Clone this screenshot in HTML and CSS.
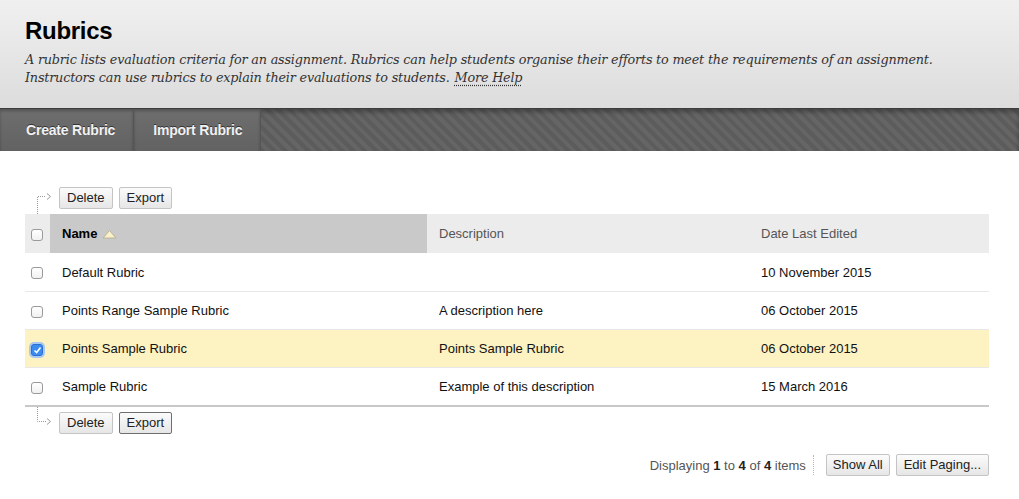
FILE: index.html
```html
<!DOCTYPE html>
<html>
<head>
<meta charset="utf-8">
<link rel="stylesheet" href="styles.css">
</head>
<body>
<header class="page-header">
  <h1 class="title">Rubrics</h1>
  <p class="intro"><span class="intro-text">A rubric lists evaluation criteria for an assignment. Rubrics can help students organise their efforts to meet the requirements of an assignment. Instructors can use rubrics to explain their evaluations to students.</span><a class="help" href="#">More Help</a></p>
</header>
<nav class="toolbar">
  <a class="tool" href="#">Create Rubric</a>
  <a class="tool" href="#">Import Rubric</a>
</nav>
<main class="content">
  <div class="actions actions-top">
    <svg class="connector" width="34" height="27" viewBox="0 0 34 27">
      <path d="M12.5 27 V9.5 H21" fill="none" stroke="#9a9a9a" stroke-dasharray="1 1"/>
      <path d="M22 6.5 L25.5 9.5 L22 12.5" fill="none" stroke="#9a9a9a"/>
    </svg>
    <button class="btn">Delete</button>
    <button class="btn">Export</button>
  </div>
  <table class="grid">
    <colgroup>
      <col class="w-check">
      <col class="w-name">
      <col class="w-desc">
      <col>
    </colgroup>
    <thead>
      <tr>
        <th class="c-check"><span class="cb"></span></th>
        <th class="sorted">Name <svg class="sort" width="15" height="10" viewBox="0 0 15 10"><path d="M1 9 L7.5 1.5 L14 9 Z" fill="#fbf1c8" stroke="#b9b29a"/></svg></th>
        <th>Description</th>
        <th>Date Last Edited</th>
      </tr>
    </thead>
    <tbody>
      <tr>
        <td class="c-check"><span class="cb"></span></td>
        <td>Default Rubric</td>
        <td></td>
        <td>10 November 2015</td>
      </tr>
      <tr>
        <td class="c-check"><span class="cb"></span></td>
        <td>Points Range Sample Rubric</td>
        <td>A description here</td>
        <td>06 October 2015</td>
      </tr>
      <tr class="selected">
        <td class="c-check"><span class="cb checked"><svg width="9" height="8" viewBox="0 0 9 8"><path d="M1.5 4.5 L3.6 6.5 L7.5 1.5" fill="none" stroke="#fff" stroke-width="1.6"/></svg></span></td>
        <td>Points Sample Rubric</td>
        <td>Points Sample Rubric</td>
        <td>06 October 2015</td>
      </tr>
      <tr>
        <td class="c-check"><span class="cb"></span></td>
        <td>Sample Rubric</td>
        <td>Example of this description</td>
        <td>15 March 2016</td>
      </tr>
    </tbody>
  </table>
  <div class="actions actions-bottom">
    <svg class="connector" width="34" height="27" viewBox="0 0 34 27">
      <path d="M12.5 0 V14.5 H21" fill="none" stroke="#9a9a9a" stroke-dasharray="1 1"/>
      <path d="M22 11.5 L25.5 14.5 L22 17.5" fill="none" stroke="#9a9a9a"/>
    </svg>
    <button class="btn">Delete</button>
    <button class="btn focus">Export</button>
  </div>
  <div class="paging">
    <span class="count">Displaying <b>1</b> to <b>4</b> of <b>4</b> items</span>
    <span class="sep"></span>
    <button class="btn show-all">Show All</button>
    <button class="btn">Edit Paging...</button>
  </div>
</main>
</body>
</html>
```
FILE: styles.css
```css
html, body {
  margin: 0;
  padding: 0;
  background: #fff;
}
body {
  font-family: "Liberation Sans", Arial, sans-serif;
  font-size: 13px;
  color: #222;
}
.page-header {
  height: 109px;
  box-sizing: border-box;
  padding: 17px 25px 0 25px;
  background: linear-gradient(#f0f0f0, #dcdcdc);
  border-bottom: 1px solid #3c3c3c;
}
.title {
  margin: 0;
  font-size: 24px;
  font-weight: bold;
  color: #000;
  line-height: 28px;
  letter-spacing: -0.3px;
}
.intro {
  max-width: 935px;
  margin: 6px 0 0 0;
  font-family: "DejaVu Serif", Georgia, serif;
  font-style: italic;
  font-size: 12.8px;
  letter-spacing: -0.2px;
  line-height: 18px;
  color: #333;
}
.help {
  display: inline-block;
  margin-left: 5px;
  line-height: 16px;
  color: #333;
  text-decoration: underline dotted #333;
  text-underline-offset: 3px;
}
.toolbar {
  display: flex;
  height: 42px;
  background: repeating-linear-gradient(45deg, #5c5c5c 0 4px, #656565 4px 8px);
  box-shadow: inset 0 3px 4px rgba(0,0,0,0.3);
}
.tool {
  display: flex;
  align-items: center;
  padding: 0 18px 0 26px;
  background: linear-gradient(#6e6e6e, #626262);
  border-right: 1px solid #555;
  color: #f2f2f2;
  font-weight: bold;
  font-size: 14px;
  text-decoration: none;
  text-shadow: 0 -1px 0 #333;
  box-shadow: inset 0 2px 3px rgba(0,0,0,0.25);
  letter-spacing: -0.2px;
}
.tool + .tool {
  padding: 0 18px 0 19px;
}
.content {
  padding: 36px 30px 0 25px;
}
.actions {
  display: flex;
  align-items: flex-start;
  gap: 6px;
  height: 27px;
}
.connector {
  flex: none;
  margin-right: -6px;
  display: block;
}
.btn {
  font-family: "Liberation Sans", Arial, sans-serif;
  font-size: 13px;
  color: #222;
  height: 22px;
  padding: 0 7px;
  border: 1px solid #c4c4c4;
  border-radius: 2px;
  background: linear-gradient(#fbfbfb, #e6e6e6);
  line-height: 20px;
  cursor: pointer;
}
.btn.focus {
  border-color: #6f6f6f;
}
.grid {
  width: 100%;
  table-layout: fixed;
  border-collapse: collapse;
  border-bottom: 2px solid #c8c8c8;
}
.w-check { width: 25px; }
.w-name { width: 377px; }
.w-desc { width: 322px; }
.grid th, .grid td {
  text-align: left;
  font-weight: normal;
  padding: 0 12px;
  vertical-align: middle;
  white-space: nowrap;
}
.grid th {
  height: 39px;
  background: #ececec;
  color: #555;
}
.grid th.sorted {
  background: #c9c9c9;
  color: #000;
  font-weight: bold;
}
.grid td {
  height: 37px;
  border-top: 1px solid #e8e8e8;
  color: #111;
}
.grid tbody tr:first-child td {
  height: 38px;
  border-top: none;
}
.grid .c-check {
  padding: 0 0 0 6px;
}
.sort {
  vertical-align: -1px;
  margin-left: 1px;
}
.selected td {
  background: #fcf2c2;
}
.cb {
  display: inline-flex;
  align-items: center;
  justify-content: center;
  box-sizing: border-box;
  width: 12px;
  height: 12px;
  border: 1px solid #9a9a9a;
  border-radius: 3px;
  background: linear-gradient(#fff, #f0f0f0);
  vertical-align: middle;
}
.cb.checked {
  background: #3b8cf0;
  border-color: #2b6fd0;
  box-shadow: 0 0 0 2px #a9c8f0;
}
.actions-bottom .btn {
  margin-top: 5px;
}
.paging {
  display: flex;
  justify-content: flex-end;
  align-items: center;
  margin-top: 20px;
}
.count {
  color: #555;
}
.count b {
  color: #222;
}
.sep {
  width: 0;
  height: 20px;
  border-left: 1px dotted #bbb;
  margin: 0 12px 0 7px;
}
.paging .show-all {
  padding: 0 6px;
}
.paging .btn + .btn {
  margin-left: 6px;
}
```
